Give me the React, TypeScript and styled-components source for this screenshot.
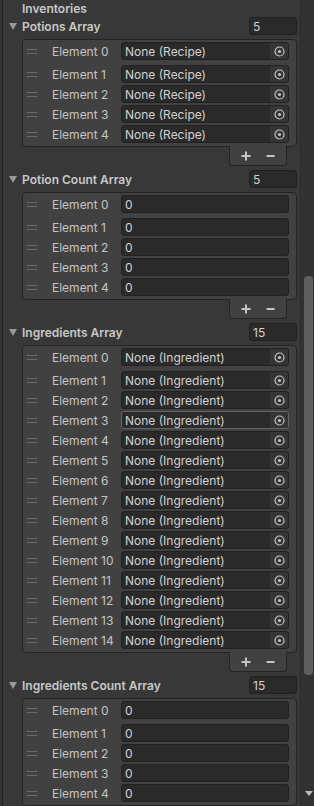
import React from 'react';
import styled, { createGlobalStyle } from 'styled-components';

const GlobalStyle = createGlobalStyle`
  html, body {
    margin: 0;
    padding: 0;
    background: #333333;
    overflow: hidden;
  }
  body {
    font-family: Inter, "Noto Sans", sans-serif;
    font-size: 12px;
    color: #c4c4c4;
  }
  * {
    box-sizing: border-box;
  }
`;

const Window = styled.div`
  display: flex;
  height: 806px;
  margin-left: 2px;
  border-left: 1px solid #232323;
  background: #383838;
  overflow: hidden;
`;

const Content = styled.div`
  flex: 1;
  min-width: 0;
  padding-right: 3px;
`;

const Title = styled.div`
  height: 16px;
  padding-top: 2px;
  line-height: 14px;
  padding-left: 19px;
  font-weight: 600;
  color: #c8c8c8;
`;

const Block = styled.section`
  display: flex;
  flex-direction: column;
  margin-bottom: 3px;
`;

const Header = styled.div`
  display: flex;
  align-items: center;
  height: 20px;
  padding-left: 6px;
  margin-bottom: 3px;
`;

const Arrow = styled.span`
  width: 0;
  height: 0;
  border-left: 4px solid transparent;
  border-right: 4px solid transparent;
  border-top: 7px solid #999999;
  margin-right: 5px;
`;

const HeaderLabel = styled.span`
  flex: 1;
  font-weight: 600;
  color: #c8c8c8;
`;

const SizeField = styled.div`
  width: 48px;
  height: 18px;
  display: flex;
  align-items: center;
  padding-left: 3px;
  background: #2a2a2a;
  border: 1px solid #212121;
  border-radius: 3px;
  color: #d2d2d2;
`;

const List = styled.div`
  margin-left: 19px;
  display: flex;
  flex-direction: column;
  gap: 2px;
  padding: 2px 7px 3px 4px;
  background: #414141;
  border: 1px solid #242424;
  border-radius: 4px;
`;

const Row = styled.div`
  display: flex;
  align-items: center;
  height: 18px;

  &:first-child {
    margin-bottom: 3px;
  }
`;

const Handle = styled.span`
  width: 10px;
  height: 5px;
  border-top: 1px solid #6a6a6a;
  border-bottom: 1px solid #6a6a6a;
  margin-right: 15px;
`;

const ElementLabel = styled.span`
  width: 69px;
  white-space: nowrap;
`;

const Field = styled.div<{ $hover?: boolean }>`
  flex: 1;
  height: 18px;
  display: flex;
  align-items: center;
  padding-left: 3px;
  background: #2a2a2a;
  border: 1px solid ${(p) => (p.$hover ? '#656565' : '#212121')};
  border-radius: 3px;
  color: #d2d2d2;
  white-space: nowrap;
  overflow: hidden;
`;

const Picker = styled.span`
  margin-left: auto;
  width: 18px;
  height: 100%;
  display: flex;
  align-items: center;
  justify-content: center;
  background: #353535;
  border-radius: 0 2px 2px 0;
`;

const Footer = styled.div`
  align-self: flex-end;
  width: 58px;
  height: 20px;
  margin-top: -1px;
  margin-right: 10px;
  display: flex;
  justify-content: center;
  align-items: center;
  background: #414141;
  border: 1px solid #242424;
  border-top: none;
  border-radius: 0 0 4px 4px;
`;

const FooterButton = styled.span`
  width: 25px;
  height: 16px;
  display: flex;
  align-items: center;
  justify-content: center;
`;

const ScrollTrack = styled.div`
  width: 14px;
  flex-shrink: 0;
  display: flex;
  flex-direction: column;
  padding-left: 3px;
  background: #323232;
  border-left: 1px solid #2b2b2b;
`;

const Thumb = styled.div`
  width: 9px;
  height: 399px;
  margin-top: 276px;
  background: #5f5f5f;
  border-radius: 4px;
`;

const DownArrow = styled.span`
  margin-top: auto;
  margin-bottom: 10px;
  margin-left: 1px;
  width: 0;
  height: 0;
  border-left: 4px solid transparent;
  border-right: 4px solid transparent;
  border-top: 5px solid #bdbdbd;
`;

const TargetIcon = () => (
  <svg width="11" height="11" viewBox="0 0 11 11">
    <circle cx="5.5" cy="5.5" r="4.5" fill="none" stroke="#c4c4c4" strokeWidth="1.2" />
    <circle cx="5.5" cy="5.5" r="1.6" fill="#c4c4c4" />
  </svg>
);

const PlusIcon = () => (
  <svg width="10" height="10" viewBox="0 0 10 10">
    <path d="M5 0.5V9.5M0.5 5H9.5" stroke="#c4c4c4" strokeWidth="2" />
  </svg>
);

const MinusIcon = () => (
  <svg width="9" height="10" viewBox="0 0 9 10">
    <path d="M0.5 5H8.5" stroke="#c4c4c4" strokeWidth="2" />
  </svg>
);

type ArrayProps = {
  title: string;
  count: number;
  objectType?: string;
  hoverIndex?: number;
  // rows that fit in the scroll view; the rest are not drawn
  visibleRows?: number;
  showFooter?: boolean;
};

const ArrayBlock: React.FC<ArrayProps> = ({
  title,
  count,
  objectType,
  hoverIndex,
  visibleRows,
  showFooter = true,
}) => {
  const items = Array.from({ length: visibleRows ?? count }, (_, i) => i);
  return (
    <Block>
      <Header>
        <Arrow />
        <HeaderLabel>{title}</HeaderLabel>
        <SizeField>{count}</SizeField>
      </Header>
      <List>
        {items.map((i) => (
          <Row key={i}>
            <Handle />
            <ElementLabel>Element {i}</ElementLabel>
            <Field $hover={i === hoverIndex}>
              {objectType ? (
                <>
                  None ({objectType})
                  <Picker>
                    <TargetIcon />
                  </Picker>
                </>
              ) : (
                '0'
              )}
            </Field>
          </Row>
        ))}
      </List>
      {showFooter && (
        <Footer>
          <FooterButton>
            <PlusIcon />
          </FooterButton>
          <FooterButton>
            <MinusIcon />
          </FooterButton>
        </Footer>
      )}
    </Block>
  );
};

const App: React.FC = () => {
  return (
    <>
      <GlobalStyle />
      <Window>
        <Content>
          <Title>Inventories</Title>
          <ArrayBlock title="Potions Array" count={5} objectType="Recipe" />
          <ArrayBlock title="Potion Count Array" count={5} />
          <ArrayBlock title="Ingredients Array" count={15} objectType="Ingredient" hoverIndex={3} />
          <ArrayBlock title="Ingredients Count Array" count={15} visibleRows={5} showFooter={false} />
        </Content>
        <ScrollTrack>
          <Thumb />
          <DownArrow />
        </ScrollTrack>
      </Window>
    </>
  );
};

export default App;
